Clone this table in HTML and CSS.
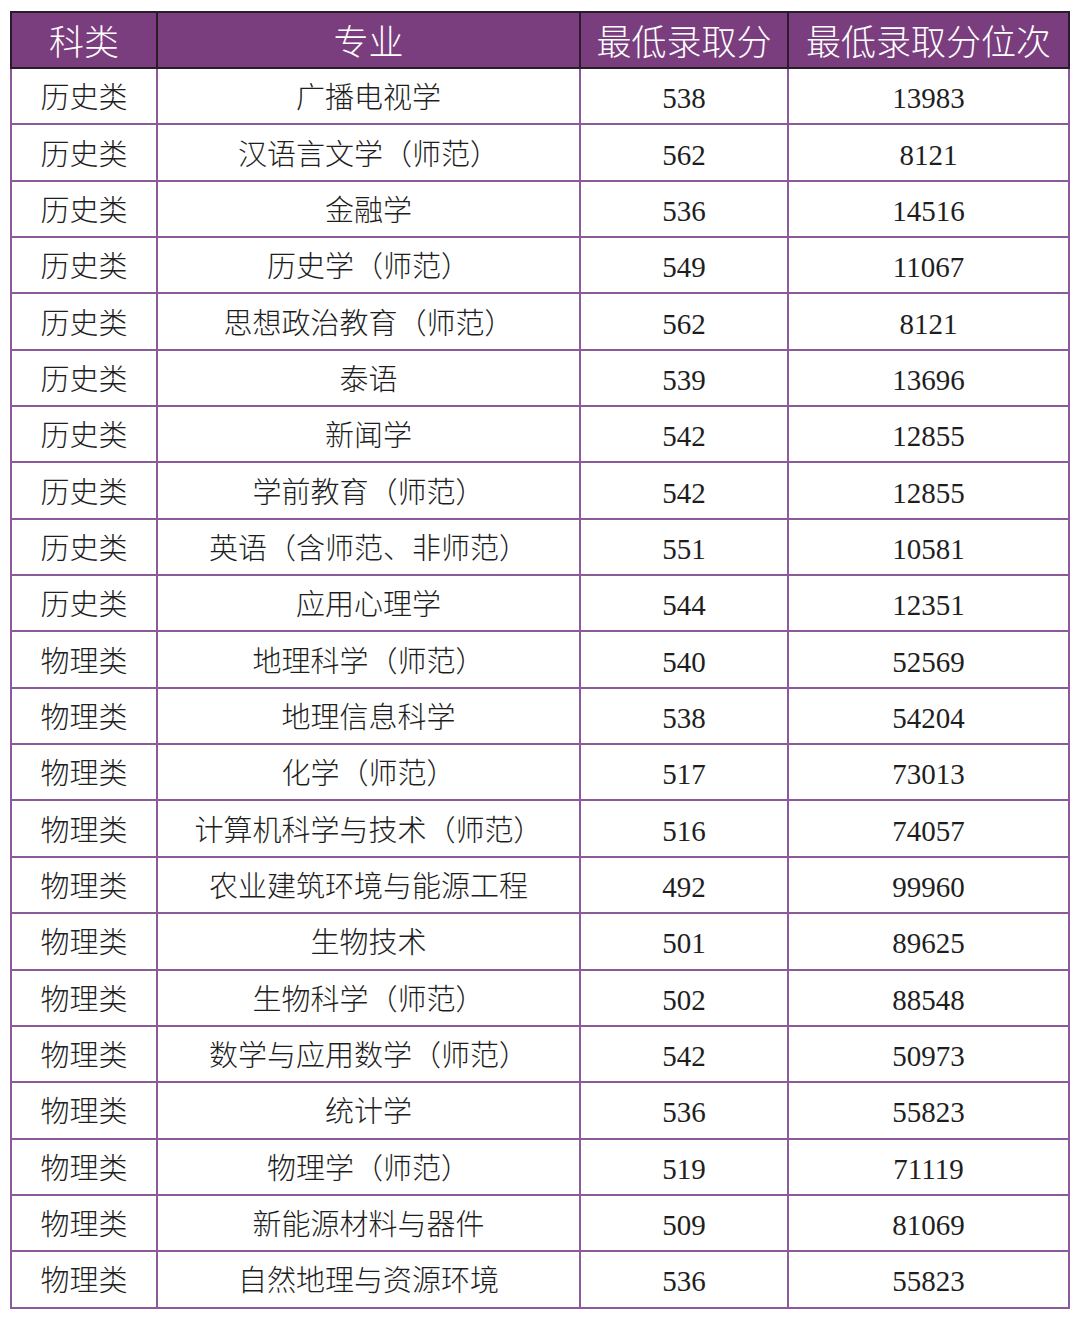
FILE: index.html
```html
<!DOCTYPE html>
<html lang="zh-CN">
<head>
<meta charset="utf-8">
<link rel="stylesheet" href="styles.css">
</head>
<body>
<table class="score-table">
  <colgroup>
    <col class="c1"><col class="c2"><col class="c3"><col class="c4">
  </colgroup>
  <thead>
    <tr><th>科类</th><th>专业</th><th>最低录取分</th><th>最低录取分位次</th></tr>
  </thead>
  <tbody>
    <tr><td>历史类</td><td>广播电视学</td><td>538</td><td>13983</td></tr>
    <tr><td>历史类</td><td>汉语言文学（师范）</td><td>562</td><td>8121</td></tr>
    <tr><td>历史类</td><td>金融学</td><td>536</td><td>14516</td></tr>
    <tr><td>历史类</td><td>历史学（师范）</td><td>549</td><td>11067</td></tr>
    <tr><td>历史类</td><td>思想政治教育（师范）</td><td>562</td><td>8121</td></tr>
    <tr><td>历史类</td><td>泰语</td><td>539</td><td>13696</td></tr>
    <tr><td>历史类</td><td>新闻学</td><td>542</td><td>12855</td></tr>
    <tr><td>历史类</td><td>学前教育（师范）</td><td>542</td><td>12855</td></tr>
    <tr><td>历史类</td><td>英语（含师范、非师范）</td><td>551</td><td>10581</td></tr>
    <tr><td>历史类</td><td>应用心理学</td><td>544</td><td>12351</td></tr>
    <tr><td>物理类</td><td>地理科学（师范）</td><td>540</td><td>52569</td></tr>
    <tr><td>物理类</td><td>地理信息科学</td><td>538</td><td>54204</td></tr>
    <tr><td>物理类</td><td>化学（师范）</td><td>517</td><td>73013</td></tr>
    <tr><td>物理类</td><td>计算机科学与技术（师范）</td><td>516</td><td>74057</td></tr>
    <tr><td>物理类</td><td>农业建筑环境与能源工程</td><td>492</td><td>99960</td></tr>
    <tr><td>物理类</td><td>生物技术</td><td>501</td><td>89625</td></tr>
    <tr><td>物理类</td><td>生物科学（师范）</td><td>502</td><td>88548</td></tr>
    <tr><td>物理类</td><td>数学与应用数学（师范）</td><td>542</td><td>50973</td></tr>
    <tr><td>物理类</td><td>统计学</td><td>536</td><td>55823</td></tr>
    <tr><td>物理类</td><td>物理学（师范）</td><td>519</td><td>71119</td></tr>
    <tr><td>物理类</td><td>新能源材料与器件</td><td>509</td><td>81069</td></tr>
    <tr><td>物理类</td><td>自然地理与资源环境</td><td>536</td><td>55823</td></tr>
  </tbody>
</table>
</body>
</html>
```

FILE: styles.css
```css
html, body {
  margin: 0;
  padding: 0;
  background: #ffffff;
}
body {
  padding: 11px 0 0 10px;
  font-family: "Liberation Serif", "Noto Sans CJK SC", serif;
}
.score-table {
  border-collapse: collapse;
  table-layout: fixed;
  width: 1058px;
}
.c1 { width: 146px; }
.c2 { width: 423px; }
.c3 { width: 208px; }
.c4 { width: 281px; }
.score-table th {
  background: #7a3d7e;
  color: #ffffff;
  font-weight: 300;
  font-size: 35px;
  height: 48px;
  padding: 6px 0 0 0;
  border: 2px solid #2a1b2a;
  text-align: center;
  vertical-align: middle;
  line-height: 1;
}
.score-table td {
  height: 49.35px;
  padding: 5px 0 0 0;
  border: 2px solid #8c5a9b;
  text-align: center;
  vertical-align: middle;
  font-size: 29px;
  font-weight: 300;
  color: #1e1e1e;
  line-height: 1;
}
.score-table tbody tr:first-child td {
  border-top-color: #2a1b2a;
}
```
